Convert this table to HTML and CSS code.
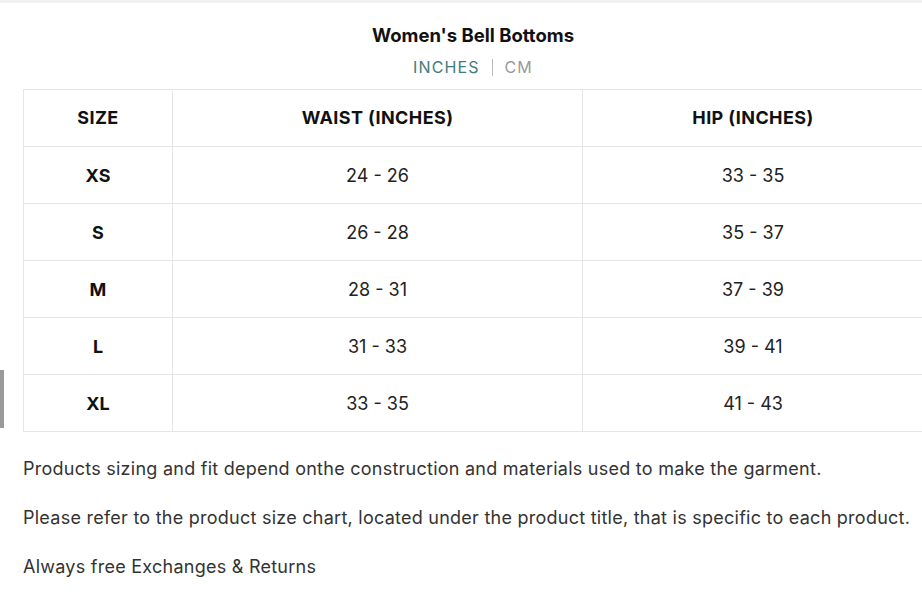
FILE: index.html
```html
<!DOCTYPE html>
<html lang="en">
<head>
<meta charset="utf-8">
<title>Women's Bell Bottoms size chart</title>
<link rel="stylesheet" href="styles.css">
</head>
<body>
<div class="topbar"></div>
<div class="edge-tab"></div>
<main class="chart">
  <h2 class="title">Women's Bell Bottoms</h2>
  <div class="units"><span class="unit active">INCHES</span><span class="sep"></span><span class="unit">CM</span></div>
  <table class="sizes">
    <colgroup><col class="c1"><col class="c2"><col class="c3"></colgroup>
    <thead>
      <tr><th>SIZE</th><th>WAIST (INCHES)</th><th>HIP (INCHES)</th></tr>
    </thead>
    <tbody>
      <tr><th>XS</th><td>24 - 26</td><td>33 - 35</td></tr>
      <tr><th>S</th><td>26 - 28</td><td>35 - 37</td></tr>
      <tr><th>M</th><td>28 - 31</td><td>37 - 39</td></tr>
      <tr><th>L</th><td>31 - 33</td><td>39 - 41</td></tr>
      <tr><th>XL</th><td>33 - 35</td><td>41 - 43</td></tr>
    </tbody>
  </table>
  <div class="notes">
    <p>Products sizing and fit depend onthe construction and materials used to make the garment.</p>
    <p>Please refer to the product size chart, located under the product title, that is specific to each product.</p>
    <p>Always free Exchanges &amp; Returns</p>
  </div>
</main>
</body>
</html>
```
FILE: styles.css
```css
html, body {
  margin: 0;
  padding: 0;
  background: #ffffff;
  overflow: hidden;
}
body {
  font-family: "Inter", "Open Sans", sans-serif;
  color: #222222;
  width: 922px;
  height: 602px;
  position: relative;
}
.topbar {
  height: 3px;
  background: #f1f1f1;
}
.edge-tab {
  position: absolute;
  left: 0;
  top: 370px;
  width: 4px;
  height: 58px;
  background: #9a9a9a;
}
.chart {
  margin-left: 23px;
  width: 900px;
  padding-top: 21px;
}
.title {
  margin: 0;
  text-align: center;
  font-size: 18.5px;
  font-weight: 700;
  color: #111111;
  line-height: 22px;
  letter-spacing: 0;
}
.units {
  display: flex;
  justify-content: center;
  align-items: center;
  gap: 12px;
  margin-top: 11px;
  height: 20px;
  font-size: 16px;
  letter-spacing: 1.1px;
  color: #999999;
}
.unit.active {
  color: #3f7c7c;
}
.sep {
  width: 1px;
  height: 17px;
  background: #bbbbbb;
}
.sizes {
  margin-top: 12px;
  width: 900px;
  border-collapse: collapse;
  table-layout: fixed;
}
.c1 { width: 149px; }
.c2 { width: 410px; }
.c3 { width: 341px; }
.sizes th, .sizes td {
  border: 1px solid #e6e6e6;
  height: 56px;
  padding: 0;
  text-align: center;
  vertical-align: middle;
  font-size: 18px;
}
.sizes th {
  font-weight: 700;
  color: #111111;
}
.sizes thead th {
  letter-spacing: 0.4px;
  height: 54px;
  padding-bottom: 2px;
}
.sizes td {
  font-weight: 400;
  color: #222222;
}
.notes {
  padding-top: 26px;
}
.notes p {
  margin: 0 0 27px 0;
  font-size: 18px;
  line-height: 22px;
  letter-spacing: 0.25px;
  color: #333333;
}
```
